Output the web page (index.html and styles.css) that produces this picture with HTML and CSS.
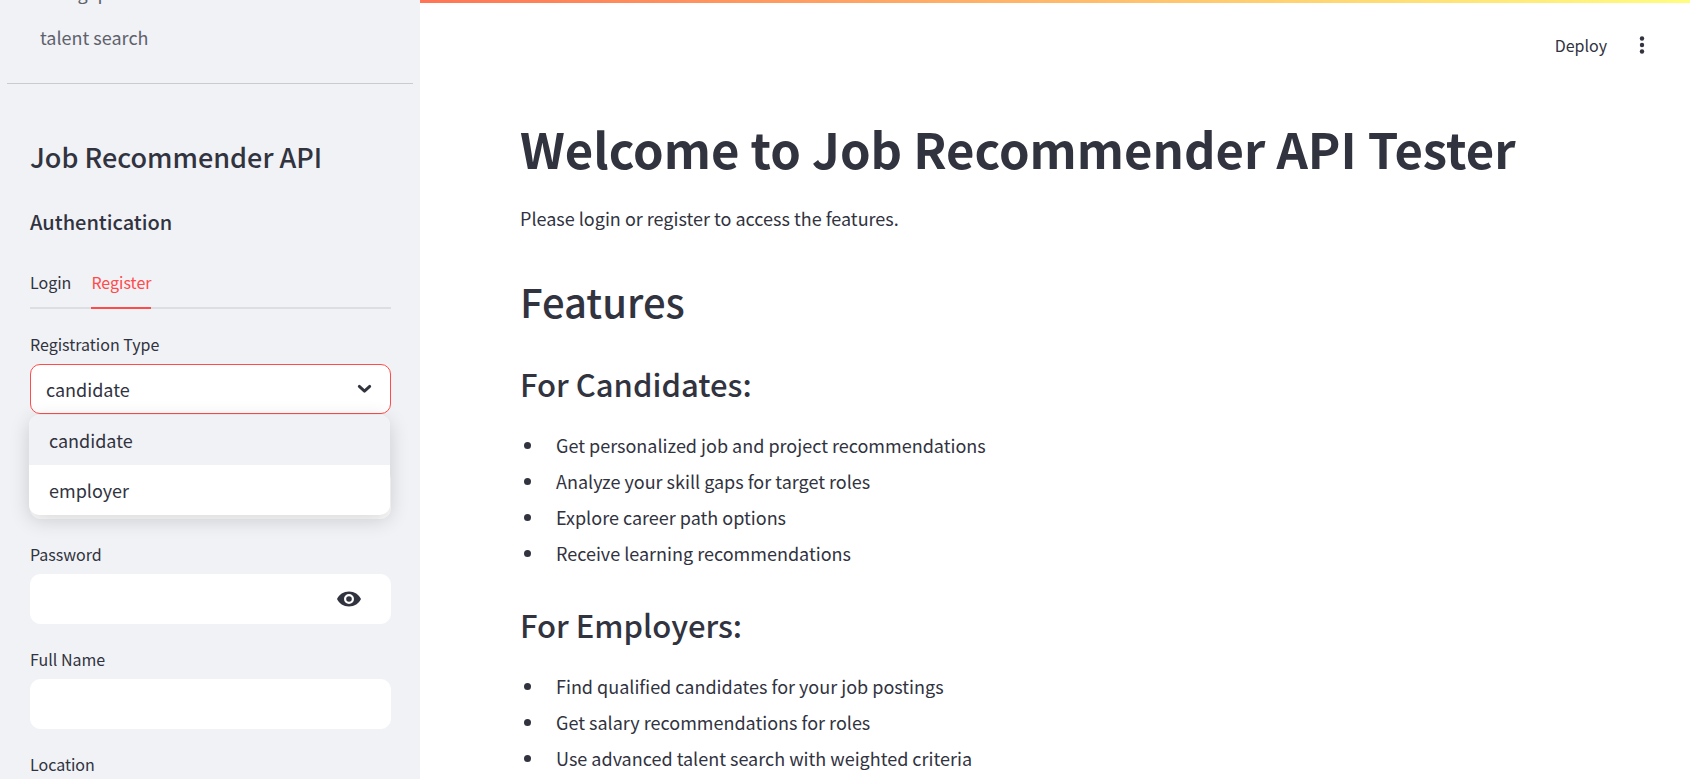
FILE: index.html
```html
<!DOCTYPE html>
<html lang="en">
<head>
<meta charset="utf-8">
<title>Job Recommender API Tester</title>
<link rel="stylesheet" href="styles.css">
</head>
<body>
<div class="app">
  <aside class="sidebar">
    <nav class="side-nav">
      <a href="#skill-gap">skill gap</a>
      <a href="#talent-search">talent search</a>
    </nav>
    <div class="side-body">
      <h2 class="side-title">Job Recommender API</h2>
      <h3 class="side-subtitle">Authentication</h3>
      <div class="tabs" role="tablist">
        <button class="tab" type="button" role="tab" aria-selected="false">Login</button>
        <button class="tab" type="button" role="tab" aria-selected="true">Register</button>
      </div>
      <form class="form">
        <div class="field">
          <label for="reg-type">Registration Type</label>
          <div class="control">
            <select id="reg-type" class="box box-active">
              <option selected>candidate</option>
              <option>employer</option>
            </select>
            <svg class="chevron" viewBox="0 0 24 24" aria-hidden="true"><path d="M7 10l5 4.500 5-4.500" fill="none" stroke="currentColor" stroke-width="2.800" stroke-linecap="round" stroke-linejoin="round"/></svg>
            <ul class="menu" role="listbox" aria-label="Registration Type">
              <li class="option option-active" role="option" aria-selected="true">candidate</li>
              <li class="option" role="option" aria-selected="false">employer</li>
            </ul>
          </div>
        </div>
        <div class="field field-covered">
          <label for="email">Email</label>
          <input id="email" class="box" type="email">
        </div>
        <div class="field">
          <label for="password">Password</label>
          <div class="control">
            <input id="password" class="box" type="password">
            <button class="reveal" type="button" aria-label="Show password">
              <svg viewBox="0 0 24 16" aria-hidden="true"><path fill="currentColor" fill-rule="evenodd" d="M12 .500C6.600.500 2 3.600 0 8c2 4.400 6.600 7.500 12 7.500S22 12.400 24 8C22 3.600 17.400.500 12 .500zM12 13a5 5 0 1 1 0-10 5 5 0 0 1 0 10zm0-2.200a2.800 2.800 0 1 0 0-5.600 2.800 2.800 0 0 0 0 5.600z"/></svg>
            </button>
          </div>
        </div>
        <div class="field">
          <label for="name">Full Name</label>
          <input id="name" class="box" type="text">
        </div>
        <div class="field">
          <label for="location">Location</label>
          <input id="location" class="box" type="text">
        </div>
      </form>
    </div>
  </aside>
  <div class="page">
    <header class="toolbar">
      <button class="deploy" type="button">Deploy</button>
      <button class="more" type="button" aria-label="Main menu">
        <svg viewBox="0 0 6 18" aria-hidden="true"><g fill="currentColor"><circle cx="3" cy="2.500" r="2.200"/><circle cx="3" cy="9" r="2.200"/><circle cx="3" cy="15.500" r="2.200"/></g></svg>
      </button>
    </header>
    <main class="content">
      <h1>Welcome to Job Recommender API Tester</h1>
      <p>Please login or register to access the features.</p>
      <h2>Features</h2>
      <h3>For Candidates:</h3>
      <ul class="features">
        <li>Get personalized job and project recommendations</li>
        <li>Analyze your skill gaps for target roles</li>
        <li>Explore career path options</li>
        <li>Receive learning recommendations</li>
      </ul>
      <h3>For Employers:</h3>
      <ul class="features">
        <li>Find qualified candidates for your job postings</li>
        <li>Get salary recommendations for roles</li>
        <li>Use advanced talent search with weighted criteria</li>
      </ul>
    </main>
  </div>
</div>
</body>
</html>
```
FILE: styles.css
```css
* {
  box-sizing: border-box;
}

body {
  margin: 0;
  color: #31333f;
  background: #fff;
  font-family: "Noto Sans CJK SC", "Noto Sans", sans-serif;
  font-size: 18px;
  line-height: 30px;
}

h1, h2, h3, p, ul {
  margin: 0;
  padding: 0;
}

ul {
  list-style: none;
}

button, input, select {
  font: inherit;
  color: inherit;
}

button {
  padding: 0;
  border: 0;
  background: none;
  cursor: pointer;
}

svg {
  display: block;
}

.app {
  display: flex;
  height: 100vh;
  overflow: hidden;
}

/* Sidebar */

.sidebar {
  flex: 0 0 420px;
  overflow: hidden;
  background: #f0f2f6;
}

.side-nav {
  display: flex;
  flex-direction: column;
  gap: 10px;
  margin: -25px 7px 0;
  padding: 0 33px 28px;
  border-bottom: 1px solid #c9cbd1;
}

.side-nav a {
  line-height: 35px;
  color: #5f616b;
  text-decoration: none;
}

.side-body {
  padding: 55px 29px 0 30px;
}

.side-title {
  margin-bottom: 32px;
  font-size: 27px;
  line-height: 36px;
  font-weight: 500;
}

.side-subtitle {
  margin-bottom: 20px;
  font-size: 20px;
  line-height: 30px;
  font-weight: 500;
}

.tabs {
  display: flex;
  gap: 20px;
  height: 52px;
  margin-bottom: 20px;
  box-shadow: inset 0 -2px #dcdee3;
}

.tab {
  border-bottom: 2px solid transparent;
  font-size: 16px;
}

.tab[aria-selected="true"] {
  color: #ff4b4b;
  border-color: #ff4b4b;
}

.form {
  display: flex;
  flex-direction: column;
  gap: 20px;
}

.field label {
  display: block;
  margin-bottom: 5px;
  font-size: 16px;
}

/* The open menu lies over this label */
.field-covered label {
  visibility: hidden;
}

.control {
  position: relative;
}

.box {
  display: block;
  width: 100%;
  height: 50px;
  padding: 0 15px;
  border: 1px solid #fff;
  border-radius: 10px;
  outline: 0;
  background: #fff;
  appearance: none;
}

.box-active {
  border-color: #ff4b4b;
}

.chevron {
  position: absolute;
  top: 12px;
  right: 14px;
  width: 25px;
  height: 25px;
  pointer-events: none;
}

.menu {
  position: absolute;
  top: 51px;
  left: -1px;
  z-index: 1;
  width: 100%;
  overflow: hidden;
  border-radius: 10px;
  background: #fff;
  box-shadow: 0 5px 20px rgba(0, 0, 0, 0.16);
}

.option {
  padding: 0 20px;
  line-height: 50px;
}

.option-active {
  background: #f0f2f6;
}

.reveal {
  position: absolute;
  top: 0;
  right: 20px;
  display: grid;
  place-items: center;
  width: 44px;
  height: 50px;
}

.reveal svg {
  width: 24px;
  height: 16px;
}

/* Main page */

.page {
  flex: 1;
  min-width: 0;
  overflow: hidden;
}

.toolbar {
  display: flex;
  align-items: center;
  justify-content: flex-end;
  gap: 32px;
  height: 90px;
  padding-right: 45px;
  background: linear-gradient(90deg, #ff7555, #fffd80) top / 100% 3px no-repeat;
}

.deploy {
  font-size: 16px;
}

.more svg {
  width: 6px;
  height: 18px;
}

.content {
  padding: 28px 100px 0;
}

.content h1 {
  margin-bottom: 25px;
  font-size: 49px;
  line-height: 60px;
  font-weight: 700;
}

.content h2 {
  margin: 43px 0 38px;
  font-size: 40px;
  line-height: 50px;
  font-weight: 500;
}

.content h3 {
  margin-bottom: 23px;
  font-size: 31px;
  line-height: 40px;
  font-weight: 500;
}

.features {
  margin-bottom: 34px;
}

.features li {
  display: flex;
  align-items: center;
  gap: 25px;
  padding-left: 4px;
  line-height: 36px;
}

.features li::before {
  content: "";
  width: 7px;
  height: 7px;
  border-radius: 50%;
  background: currentColor;
}
```
